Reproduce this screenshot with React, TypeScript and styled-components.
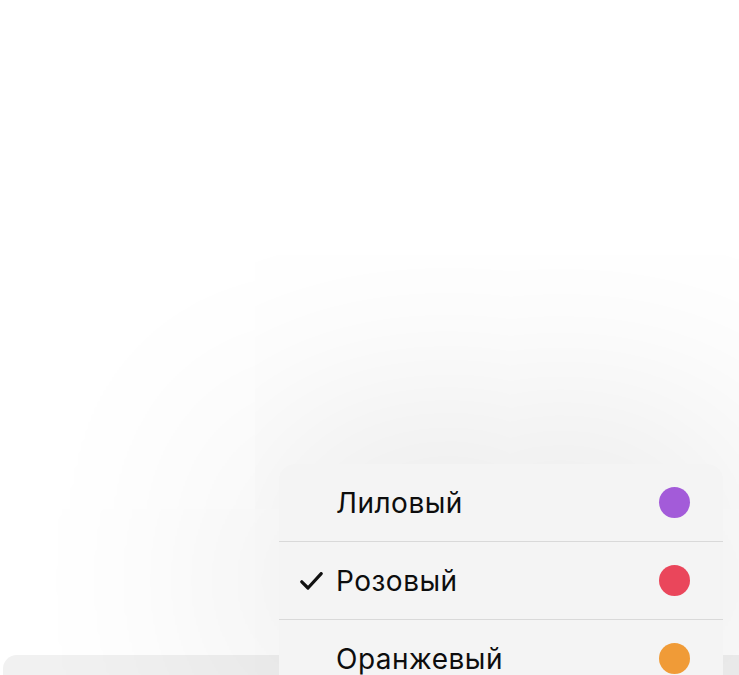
import React from "react";
import styled, { createGlobalStyle } from "styled-components";

const Global = createGlobalStyle`
  html, body { margin: 0; padding: 0; background: #ffffff; }
  body { font-family: Inter, "Noto Sans", sans-serif; -webkit-font-smoothing: antialiased; }
`;

const Page = styled.div`
  position: relative;
  width: 739px;
  height: 675px;
  overflow: hidden;
  display: flex;
  flex-direction: column;
  justify-content: flex-end;
  background: #ffffff;
`;

const BackSheet = styled.div`
  height: 20px;
  margin-left: 3px;
  background: #f1f1f1;
  border-top-left-radius: 14px;
`;

const Menu = styled.ul`
  position: absolute;
  top: 464px;
  left: 279px;
  width: 444px;
  margin: 0;
  padding: 0;
  list-style: none;
  background: #f4f4f4;
  border-radius: 16px;
  box-shadow: 0 0 240px 24px rgba(0, 0, 0, 0.12);
  overflow: hidden;
`;

const Item = styled.li`
  display: flex;
  align-items: center;
  height: 77px;
  padding: 0 33px 0 21px;
  border-bottom: 1px solid #d9d9d9;
  &:last-child { border-bottom: none; }
`;

const CheckSlot = styled.span`
  width: 36px;
  flex: none;
  display: flex;
  align-items: center;
`;

const Label = styled.span`
  flex: 1;
  font-size: 28px;
  color: #0d0d0d;
  letter-spacing: 0.5px;
`;

const Dot = styled.span<{ $color: string }>`
  width: 31px;
  height: 31px;
  border-radius: 50%;
  background: ${(p) => p.$color};
  flex: none;
`;

const Check = () => (
  <svg width="23" height="18" viewBox="0 0 23 18" fill="none">
    <path d="M1.8 9.8 L8 16 L21.2 1.6" stroke="#111" strokeWidth="3.2" strokeLinecap="round" strokeLinejoin="round" />
  </svg>
);

const items = [
  { label: "Лиловый", color: "#a35bd9", checked: false },
  { label: "Розовый", color: "#ea465b", checked: true },
  { label: "Оранжевый", color: "#f09b37", checked: false },
];

export default function App() {
  return (
    <>
      <Global />
      <Page>
        <BackSheet />
        <Menu>
          {items.map((it) => (
            <Item key={it.label}>
              <CheckSlot>{it.checked && <Check />}</CheckSlot>
              <Label>{it.label}</Label>
              <Dot $color={it.color} />
            </Item>
          ))}
        </Menu>
      </Page>
    </>
  );
}
